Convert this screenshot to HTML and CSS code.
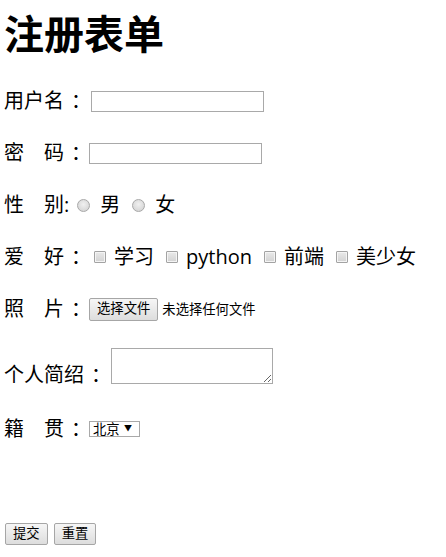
FILE: index.html
```html
<!DOCTYPE html>
<html lang="zh-CN">
<head>
<meta charset="utf-8">
<title>注册表单</title>
<link rel="stylesheet" href="styles.css">
</head>
<body>
<div class="page">
  <h1 class="title">注册表单</h1>
  <form class="form">
    <div class="row">
      <span class="label">用户名<span class="colon">：</span></span>
      <input class="text-input gap-7" type="text">
    </div>
    <div class="row">
      <span class="label">密　码<span class="colon">：</span></span>
      <input class="text-input gap-5" type="password">
    </div>
    <div class="row">
      <span class="label">性　别:</span>
      <label class="opt"><input class="radio first" type="radio" name="sex"><span>男</span></label>
      <label class="opt"><input class="radio" type="radio" name="sex"><span>女</span></label>
    </div>
    <div class="row">
      <span class="label">爱　好<span class="colon">：</span></span>
      <label class="opt"><input class="check first" type="checkbox"><span>学习</span></label>
      <label class="opt"><input class="check" type="checkbox"><span>python</span></label>
      <label class="opt"><input class="check" type="checkbox"><span>前端</span></label>
      <label class="opt"><input class="check" type="checkbox"><span>美少女</span></label>
    </div>
    <div class="row">
      <span class="label">照　片<span class="colon">：</span></span>
      <button class="btn btn-file" type="button">选择文件</button>
      <span class="file-name">未选择任何文件</span>
    </div>
    <div class="row row-bottom">
      <span class="label label-low">个人简绍<span class="colon">：</span></span>
      <textarea class="area"></textarea>
    </div>
    <div class="row row-select">
      <span class="label">籍　贯<span class="colon">：</span></span>
      <span class="select-wrap">
        <select class="select">
          <option>北京</option>
          <option>上海</option>
          <option>广州</option>
        </select>
      </span>
    </div>
    <div class="row row-actions">
      <button class="btn btn-first" type="submit">提交</button>
      <button class="btn btn-next" type="reset">重置</button>
    </div>
  </form>
</div>
</body>
</html>
```

FILE: styles.css
```css
html, body {
  margin: 0;
  padding: 0;
  background: #fff;
}

body {
  font-family: "Open Sans", "Noto Sans CJK SC", sans-serif;
  font-size: 20px;
  line-height: 26px;
  color: #000;
}

.page {
  padding: 10px 0 0 4px;
}

.title {
  margin: 0 0 30px;
  font-size: 40px;
  line-height: 48px;
  font-weight: bold;
}

.form {
  display: flex;
  flex-direction: column;
  gap: 26px;
}

.row {
  display: flex;
  align-items: center;
  height: 26px;
  white-space: nowrap;
}

.colon {
  display: inline-block;
  padding-left: 7px;
  margin-right: -7px;
}

.row-bottom {
  height: auto;
  align-items: flex-end;
}

.label-low {
  margin-bottom: -4px;
}

.row-select {
  margin-top: 6px;
}

.row-actions {
  margin-top: 55px;
  height: 22px;
}

.text-input {
  box-sizing: border-box;
  width: 173px;
  height: 21px;
  margin: 0;
  padding: 1px 2px;
  border: 1px solid #a9a9a9;
  border-radius: 0;
  background: #fff;
  font-size: 13.333px;
  outline: none;
}

.gap-7 { margin-left: 7px; }
.gap-5 { margin-left: 5px; }

.opt {
  display: flex;
  align-items: center;
}

.radio {
  appearance: none;
  -webkit-appearance: none;
  box-sizing: border-box;
  width: 13px;
  height: 13px;
  margin: 0 10px 0 12px;
  border: 1px solid #a8a8a8;
  border-radius: 50%;
  background: radial-gradient(circle at 50% 40%, #f0f0f0 0%, #dcdcdc 60%, #cfcfcf 100%);
}

.radio.first {
  margin-left: 8px;
}

.check {
  appearance: none;
  -webkit-appearance: none;
  box-sizing: border-box;
  width: 12px;
  height: 12px;
  margin: 0 8px 0 12px;
  border: 1px solid #a3a3a3;
  border-radius: 1px;
  background: linear-gradient(#e9e9e9, #d2d2d2);
  box-shadow: inset 0 0 0 1px #f4f4f4;
}

.check.first {
  margin-left: 10px;
}

.btn {
  box-sizing: border-box;
  height: 23px;
  margin: 0;
  padding: 0 7px;
  border: 1px solid #a6a6a6;
  border-radius: 2px;
  background: linear-gradient(#f6f6f6, #dddddd);
  color: #000;
  font-family: "Open Sans", "Noto Sans CJK SC", sans-serif;
  font-size: 13.333px;
  line-height: 1;
}

.btn-file {
  margin-left: 5px;
}

.row-actions .btn {
  height: 22px;
}

.btn-first {
  margin-left: 1px;
}

.btn-next {
  margin-left: 6px;
}

.file-name {
  margin-left: 4px;
  font-size: 13.333px;
  line-height: 18px;
}

.area {
  box-sizing: border-box;
  width: 162px;
  height: 36px;
  margin: 0 0 0 7px;
  padding: 2px;
  border: 1px solid #a9a9a9;
  border-radius: 0;
  background: #fff;
  font-size: 13.333px;
  outline: none;
}

.select-wrap {
  position: relative;
  display: inline-flex;
  margin-left: 5px;
}

.select {
  appearance: none;
  -webkit-appearance: none;
  box-sizing: border-box;
  width: 51px;
  height: 16px;
  margin: 0;
  padding: 0 14px 0 3px;
  border: 1px solid #a9a9a9;
  border-radius: 0;
  background: #fff;
  color: #000;
  font-family: "Open Sans", "Noto Sans CJK SC", sans-serif;
  font-size: 13.333px;
  line-height: 14px;
}

.select-wrap::after {
  content: "▼";
  position: absolute;
  right: 8px;
  top: 3px;
  font-size: 8px;
  line-height: 8px;
  color: #000;
  pointer-events: none;
}
```
